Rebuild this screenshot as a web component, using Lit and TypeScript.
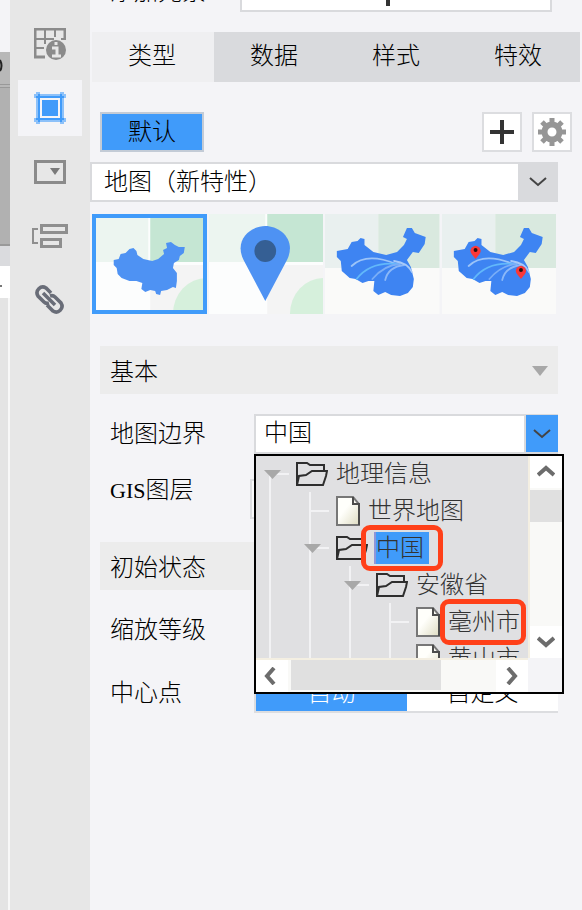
import { LitElement, html, css, svg, nothing, TemplateResult } from "lit";
import { customElement, property } from "lit/decorators.js";

const CHINA =
  "M2 25 L7 24 L9 19 L14 18 L18 14 L22 13 L25 16 L26 20 L32 24 L41 26 L47 24 L53 19 L52 15 L56 13 L55 8 L60 7 L64 10 L68 12 L74 12 L73 18 L69 21 L68 25 L63 28 L62 33 L66 38 L66 46 L65 53 L62 52 L56 55 L50 56 L49 60 L45 59 L44 56 L39 55 L34 57 L30 54 L31 48 L25 46 L18 46 L10 43 L6 39 L5 33 L2 30 Z";
const CHINA_WIDE =
  "M12 37 L23 35 L27 28 L33 27 L36 24 L40 25 L40 31 L49 38 L62 41 L73 38 L80 31 L83 25 L79 23 L83 14 L88 14 L91 19 L102 23 L101 30 L95 39 L89 38 L83 46 L87 53 L90 65 L89 73 L84 79 L76 82 L67 81 L61 78 L54 81 L49 77 L50 67 L44 67 L38 69 L31 65 L25 64 L17 57 L16 47 L12 43 Z";

@customElement("map-thumb")
export class MapThumb extends LitElement {
  @property() kind = "area";

  static styles = css`
    :host { display: block; height: 100%; }
    svg { display: block; width: 100%; height: 100%; }
  `;

  private tiles() {
    return svg`
      <rect width="116" height="100" fill="#fcfdfd"/>
      <rect width="57" height="48" fill="#ecf5f0"/>
      <rect x="59" width="57" height="48" fill="#c5e6d3"/>
      <rect x="59" y="51" width="57" height="49" fill="#f4f4f4"/>
      <path d="M82 100 A34 36 0 0 1 116 64 V100 Z" fill="#d6f0dc"/>`;
  }

  private flow() {
    return svg`
      <rect width="116" height="100" fill="#fafaf9"/>
      <rect width="54" height="54" fill="#e9f0ef"/>
      <rect x="54" width="62" height="54" fill="#d9e9df"/>
      <path d=${CHINA_WIDE} fill="#3e84f2"/>
      <g fill="none" stroke-width="1.8" stroke-linecap="round">
        <path d="M27 52 Q42 38 72 50" stroke="#9cc4f8"/>
        <path d="M32 65 Q46 47 74 50" stroke="#62b8fa"/>
        <path d="M48 65 Q60 51 76 50" stroke="#7aaef7"/>
        <path d="M61 66 Q64 53 80 51" stroke="#8bb8f8"/>
        <path d="M70 47 Q84 49 88 58" stroke="#a6c9f9"/>
      </g>`;
  }

  private pin(x: number, y: number) {
    return svg`
      <path d="M${x} ${y + 8} L${x - 4} ${y + 3} A5 5 0 1 1 ${x + 4} ${y + 3} Z" fill="#fb3838"/>
      <circle cx=${x} cy=${y - 1} r="2" fill="#241010"/>`;
  }

  private picture() {
    switch (this.kind) {
      case "area":
        return svg`${this.tiles()}<path transform="translate(20 21)" d=${CHINA} fill="#4e92f3"/>`;
      case "point":
        return svg`${this.tiles()}
          <path d="M57 87 L35 46 C25 26 42 12 57 12 C72 12 89 26 79 46 Z" fill="#4e92f3"/>
          <circle cx="57" cy="37" r="11" fill="#355f94"/>`;
      case "line":
        return this.flow();
      default:
        return svg`${this.flow()}${this.pin(34, 37)}${this.pin(80, 57)}`;
    }
  }

  render() {
    return html`<svg viewBox="0 0 116 100" preserveAspectRatio="none" aria-hidden="true">${this.picture()}</svg>`;
  }
}

interface TreeNode {
  name: string;
  folder?: boolean;
  selected?: boolean;
  marked?: boolean;
  children?: TreeNode[];
}

const REGIONS: TreeNode[] = [
  {
    name: "地理信息",
    folder: true,
    children: [
      { name: "世界地图" },
      {
        name: "中国",
        folder: true,
        selected: true,
        marked: true,
        children: [
          {
            name: "安徽省",
            folder: true,
            children: [{ name: "毫州市", marked: true }, { name: "黄山市" }],
          },
        ],
      },
    ],
  },
];

@customElement("region-tree")
export class RegionTree extends LitElement {
  static styles = css`
    * { box-sizing: border-box; }
    :host {
      display: grid;
      grid-template-columns: 1fr 34px;
      grid-template-rows: 202px 34px;
      border: 2px solid #000;
      background: #f4f4f7;
      color: #333;
    }
    .view { overflow: hidden; background: #e0e0e2; }
    ul { position: relative; list-style: none; margin: 0; padding: 0; }
    .root { margin-top: -1px; }
    ul ul { margin-left: 40px; }
    ul::before {
      content: "";
      position: absolute;
      left: 13px;
      top: 0;
      width: 2px;
      height: 240px;
      background: #f2f2f4;
    }
    .root::before { top: 18px; }
    .row { position: relative; display: flex; align-items: center; gap: 8px; height: 37px; padding-left: 40px; }
    .row::before {
      content: "";
      position: absolute;
      left: 14px;
      top: 18px;
      width: 19px;
      height: 2px;
      background: #f2f2f4;
    }
    .arrow {
      position: absolute;
      left: 8px;
      top: 15px;
      width: 17px;
      height: 9px;
      background: #a8a8a8;
      clip-path: polygon(0 0, 100% 0, 50% 100%);
    }
    .icon { display: block; flex: none; }
    .name { position: relative; line-height: 32px; white-space: nowrap; }
    .selected { background: #409bfa; box-shadow: -2px 0 #8f96d8, 5px 0 #409bfa; }
    .marked::after {
      content: "";
      position: absolute;
      inset: -7px -6px -7px -8px;
      border: 5px solid #ff4019;
      border-radius: 9px;
    }
    .selected.marked::after { inset: -7px -19px -7px -15px; }
    .bar { display: flex; background: #f9f9f7; }
    .vertical { flex-direction: column; border-left: 2px solid #f4efe2; }
    .bar button { flex: none; display: grid; place-items: center; width: 32px; height: 32px; padding: 0; border: 0; background: #fff; }
    .track { flex: 1; }
    .vertical .thumb { height: 32px; margin-top: 2px; background: #e0e0e0; }
    .horizontal { border-top: 2px solid #f4efe2; }
    .horizontal .thumb { width: 150px; height: 30px; margin-left: 3px; background: #e0e0e0; }
  `;

  private folderIcon() {
    return html`<svg class="icon" width="32" height="26" viewBox="0 0 32 26" fill="none" stroke="#2e2e2e" stroke-width="2" aria-hidden="true">
      <path d="M1 24 V2 H11 L14 4 H28 V9"/>
      <path d="M1 24 L3 15 L10 14 L16 10 H31 L30 15 L27 24 Z"/>
    </svg>`;
  }

  private fileIcon() {
    return html`<svg class="icon" width="24" height="30" viewBox="0 0 24 30" aria-hidden="true">
      <defs><linearGradient id="paper" x1="0" y1="0" x2="1" y2="1"><stop offset="0.4" stop-color="#fffffb"/><stop offset="1" stop-color="#dedcc2"/></linearGradient></defs>
      <path d="M1 1 H17 L23 8 V29 H1 Z" fill="url(#paper)" stroke="#777" stroke-width="2"/>
      <path d="M17 1 V8 H23 V29" fill="none" stroke="#4c4c4c" stroke-width="2"/>
    </svg>`;
  }

  private chevron(d: string) {
    return html`<svg width="18" height="18" viewBox="0 0 18 18" fill="none" stroke="#6c6c6c" stroke-width="4" aria-hidden="true"><path d=${d}/></svg>`;
  }

  private node(n: TreeNode): TemplateResult {
    return html`<li role="treeitem" aria-selected=${n.selected ? "true" : "false"}>
      <div class="row">
        ${n.children ? html`<span class="arrow"></span>` : nothing}
        ${n.folder ? this.folderIcon() : this.fileIcon()}
        <span class="name ${n.selected ? "selected" : ""} ${n.marked ? "marked" : ""}">${n.name}</span>
      </div>
      ${n.children ? html`<ul role="group">${n.children.map((c) => this.node(c))}</ul>` : nothing}
    </li>`;
  }

  render() {
    return html`
      <div class="view"><ul class="root" role="tree">${REGIONS.map((n) => this.node(n))}</ul></div>
      <div class="bar vertical">
        <button aria-label="向上">${this.chevron("M1 12 L9 5 L17 12")}</button>
        <div class="track"><div class="thumb"></div></div>
        <button aria-label="向下">${this.chevron("M1 5 L9 12 L17 5")}</button>
      </div>
      <div class="bar horizontal">
        <button aria-label="向左">${this.chevron("M11 1 L4 9 L11 17")}</button>
        <div class="track"><div class="thumb"></div></div>
        <button aria-label="向右">${this.chevron("M5 1 L12 9 L5 17")}</button>
      </div>
      <div></div>`;
  }
}

@customElement("app-root")
export class AppRoot extends LitElement {
  static styles = css`
    * { box-sizing: border-box; }
    :host {
      display: grid;
      grid-template-columns: 10px 80px 1fr;
      min-height: 100vh;
      overflow: hidden;
      background: #f4f4f7;
      color: #000;
      font: 300 24px/32px "Liberation Serif", "Noto Sans CJK SC", sans-serif;
    }
    button, input, select { font: inherit; color: inherit; margin: 0; border-radius: 0; }
    .edge { display: flex; flex-direction: column; padding-top: 52px; overflow: hidden; }
    .edge-head { height: 36px; background: #b8b8b8; border-bottom: 4px double #999; }
    .edge-head svg { display: block; }
    .edge-canvas { height: 158px; background: #b1b1b1; border-bottom: 2px solid #999; }
    .edge-gap { height: 20px; background: #dadbde; }
    .edge-tab { display: flex; align-items: center; height: 32px; padding-top: 8px; background: #fff; }
    .edge-tab i { width: 2px; height: 2px; background: #777; }
    .edge-rest { flex: 1; background: #e4e4e4; border-right: 2px solid #f8f8f8; }

    .rail { display: flex; flex-direction: column; gap: 8px; padding: 16px 8px; background: #e7e7e7; }
    .rail button { display: grid; place-items: center; width: 64px; height: 56px; padding: 0; border: 0; background: none; }
    .rail .on { background: #f4f4f7; }

    .panel { min-width: 0; }
    .add { display: flex; align-items: flex-end; height: 12px; padding: 0 30px 0 20px; overflow: hidden; }
    .add label { width: 130px; padding-bottom: 4px; }
    .add button { flex: 1; display: flex; align-items: flex-end; justify-content: center; height: 40px; padding: 0 17px 4px 0; border: 2px solid #d9dadd; background: #fff; }
    .add button i { width: 4px; height: 24px; background: #333; }
    .tabs { display: grid; grid-template-columns: repeat(4, 1fr); margin: 20px 2px 0; }
    .tabs button { height: 50px; padding: 0 2px 2px 0; border: 0; background: #d9dadd; }
    .tabs .on { background: #efeff1; }
    .tools { display: flex; gap: 10px; margin: 30px 10px 0; }
    .tools button { display: grid; place-items: center; width: 40px; height: 40px; padding: 0; border: 2px solid #dcdde0; background: #fff; }
    .tools .preset { width: 104px; margin-right: auto; background: #409bfa; border-color: #c3cbd6; }

    .combo { position: relative; display: flex; min-width: 0; height: 40px; border: 2px solid #d9dadd; background: #fff; }
    .combo select, .combo input { flex: 1; min-width: 0; height: 36px; padding: 0 8px; border: 0; outline: 0; appearance: none; background: none; }
    .combo input { padding-bottom: 8px; }
    .combo .drop { flex: none; display: grid; place-items: center; width: 40px; margin: -2px; background: #d9dadd; border: 0; padding: 0; }
    .combo .open { width: 34px; margin: -1px -2px 0 0; border-left: 2px solid #d9dadd; background: #409bfa; }
    .kind { margin: 10px 24px 0 0; }
    .kind select { padding-left: 12px; }
    .thumbs { display: grid; grid-template-columns: repeat(4, 1fr); gap: 2px; margin: 12px 26px 0 2px; }
    .thumbs button { height: 100px; padding: 0; border: 0; background: none; }
    .thumbs .on { outline: 4px solid #409bfa; outline-offset: -4px; }

    .section { display: flex; align-items: center; justify-content: space-between; height: 48px; margin: 0 24px 0 10px; padding: 4px 10px 0; background: #ececec; }
    .basic { margin-top: 32px; }
    .initial { margin-top: 28px; }
    .arrow { width: 16px; height: 10px; margin-bottom: 2px; background: #a8a8a8; clip-path: polygon(0 0, 100% 0, 50% 100%); }
    .field { display: grid; grid-template-columns: 144px 1fr; align-items: center; height: 40px; margin: 0 24px 0 20px; }
    .boundary { margin-top: 20px; }
    .layer { margin-top: 20px; }
    .layer label { padding-bottom: 16px; }
    .latin { font-size: 22px; }
    .layer input { height: 40px; margin-left: -4px; border: 2px solid #dcdde0; background: #f8f8f9; min-width: 0; }
    .zoom { margin-top: 20px; }
    .zoom input { width: 100%; min-width: 0; height: 4px; opacity: 0; }
    .center { margin-top: 23px; }
    .popup { position: absolute; z-index: 2; left: -2px; right: -8px; top: 38px; }
    .segment { display: grid; grid-template-columns: 1fr 1fr; height: 40px; border: 2px solid #dcdde0; border-right: 0; background: #fff; }
    .segment button { padding: 0; border: 0; background: #fff; }
    .segment .on { background: #409bfa; color: #fff; }
  `;

  private chevron() {
    return html`<svg width="18" height="12" viewBox="0 0 18 12" fill="none" stroke="#444" stroke-width="2" aria-hidden="true"><path d="M1 2 L9 9 L17 2"/></svg>`;
  }

  private rail() {
    return html`<nav class="rail">
      <button aria-label="单元格属性"><svg width="32" height="32" viewBox="0 0 32 32" fill="none" stroke="#8b8b8b">
        <path d="M11 29 H1 V1 H31 V12" stroke-width="3"/>
        <path d="M2 11 H20 M2 20 H10 M11 2 V16 M21 2 V9 M27 11 H31" stroke-width="2"/>
        <circle cx="22" cy="22" r="10" fill="#8b8b8b" stroke="none"/>
        <path d="M22 14 V17 M18 20 H23 V28 M18 28 H27" stroke="#e7e7e7" stroke-width="3"/></svg></button>
      <button class="on" aria-label="单元格元素"><svg width="32" height="32" viewBox="0 0 32 32" fill="none">
        <path d="M4 0 V32 M28 0 V32 M0 4 H32 M0 28 H32" stroke="#8dc1f9" stroke-width="4"/>
        <path d="M5 2 V30 M27 2 V30 M2 5 H30 M2 27 H30" stroke="#409bfa" stroke-width="2"/>
        <rect x="8" y="8" width="16" height="16" fill="#409bfa"/></svg></button>
      <button aria-label="悬浮元素"><svg width="32" height="24" viewBox="0 0 32 24">
        <rect x="1.5" y="1.5" width="29" height="21" fill="none" stroke="#8b8b8b" stroke-width="3"/>
        <path d="M16 8 H26 L21 15 Z" fill="#7a7a7a"/></svg></button>
      <button aria-label="条件属性"><svg width="36" height="26" viewBox="0 0 36 26" fill="none" stroke="#8f8f8f">
        <path d="M6 6 H1 V20 H6" stroke-width="2"/>
        <rect x="9.5" y="2.5" width="25" height="7" stroke-width="3"/><rect x="9.5" y="16.5" width="19" height="7" stroke-width="3"/></svg></button>
      <button aria-label="超级链接"><svg width="32" height="32" viewBox="0 0 32 32" fill="none" stroke="#696d78" stroke-width="3.6">
        <path d="M17 9 L12 4 A5.8 5.8 0 0 0 4 12 L10 18 Q12 20 15 19"/>
        <path d="M13 21 L19 27 A5.8 5.8 0 0 0 27 19 L21 13 Q19 11 16 12"/>
        <path d="M9 9 L21 21"/></svg></button>
    </nav>`;
  }

  render() {
    return html`
      <div class="edge">
        <div class="edge-head"><svg width="10" height="28" viewBox="0 0 10 28"><path d="M0 8 Q3 14 0 19" fill="none" stroke="#222" stroke-width="2"/></svg></div>
        <div class="edge-canvas"></div>
        <div class="edge-gap"></div>
        <div class="edge-tab"><i></i></div>
        <div class="edge-rest"></div>
      </div>
      ${this.rail()}
      <main class="panel">
        <div class="add"><label for="insert">添加元素</label><button id="insert"><i></i></button></div>
        <div class="tabs" role="tablist">
          ${["类型", "数据", "样式", "特效"].map((t, i) => html`<button role="tab" class=${i === 0 ? "on" : ""} aria-selected=${i === 0 ? "true" : "false"}>${t}</button>`)}
        </div>
        <div class="tools">
          <button class="preset">默认</button>
          <button aria-label="添加"><svg width="24" height="24" viewBox="0 0 24 24" stroke="#333" stroke-width="4"><path d="M12 0 V24 M0 12 H24"/></svg></button>
          <button aria-label="设置"><svg width="28" height="28" viewBox="0 0 28 28" fill="none" stroke="#969696">
            <circle cx="14" cy="14" r="7.5" stroke-width="6"/>
            <path d="M14 0 V5 M14 23 V28 M0 14 H5 M23 14 H28 M4 4 L7.5 7.5 M20.5 20.5 L24 24 M24 4 L20.5 7.5 M4 24 L7.5 20.5" stroke-width="5"/></svg></button>
        </div>
        <div class="combo kind">
          <select aria-label="图表类型"><option>地图（新特性）</option></select>
          <span class="drop">${this.chevron()}</span>
        </div>
        <div class="thumbs">
          ${["area", "point", "line", "custom"].map((k, i) => html`<button class=${i === 0 ? "on" : ""} aria-label=${k}><map-thumb kind=${k}></map-thumb></button>`)}
        </div>
        <div class="section basic"><span>基本</span><span class="arrow"></span></div>
        <div class="field boundary">
          <label for="boundary">地图边界</label>
          <div class="combo">
            <input id="boundary" value="中国">
            <button class="drop open" aria-label="展开">${this.chevron()}</button>
            <region-tree class="popup"></region-tree>
          </div>
        </div>
        <div class="field layer"><label for="layer"><span class="latin">GIS</span>图层</label><input id="layer"></div>
        <div class="section initial"><span>初始状态</span></div>
        <div class="field zoom"><label for="zoom">缩放等级</label><input id="zoom"></div>
        <div class="field center">
          <span>中心点</span>
          <div class="segment"><button class="on">自动</button><button>自定义</button></div>
        </div>
      </main>`;
  }
}
